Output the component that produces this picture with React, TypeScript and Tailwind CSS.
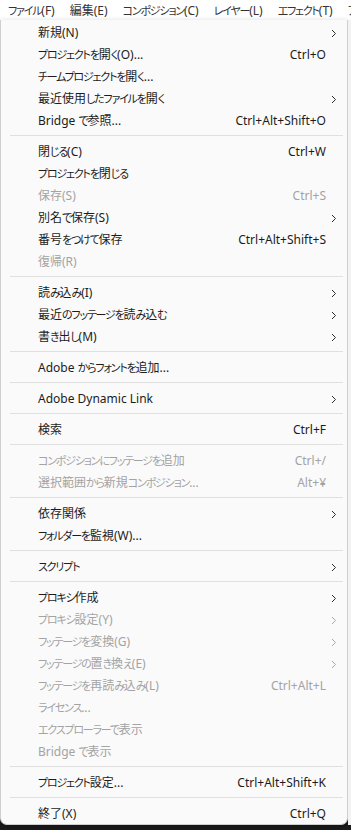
import React from 'react';

type Item =
  | { sep: true }
  | { sep?: false; label: string; shortcut?: string; sub?: boolean; disabled?: boolean };

const menuBar = ['ファイル(F)', '編集(E)', 'コンポジション(C)', 'レイヤー(L)', 'エフェクト(T)', 'アニメーション(A)'];

const items: Item[] = [
  { label: '新規(N)', sub: true },
  { label: 'プロジェクトを開く(O)...', shortcut: 'Ctrl+O' },
  { label: 'チームプロジェクトを開く...' },
  { label: '最近使用したファイルを開く', sub: true },
  { label: 'Bridge で参照...', shortcut: 'Ctrl+Alt+Shift+O' },
  { sep: true },
  { label: '閉じる(C)', shortcut: 'Ctrl+W' },
  { label: 'プロジェクトを閉じる' },
  { label: '保存(S)', shortcut: 'Ctrl+S', disabled: true },
  { label: '別名で保存(S)', sub: true },
  { label: '番号をつけて保存', shortcut: 'Ctrl+Alt+Shift+S' },
  { label: '復帰(R)', disabled: true },
  { sep: true },
  { label: '読み込み(I)', sub: true },
  { label: '最近のフッテージを読み込む', sub: true },
  { label: '書き出し(M)', sub: true },
  { sep: true },
  { label: 'Adobe からフォントを追加...' },
  { sep: true },
  { label: 'Adobe Dynamic Link', sub: true },
  { sep: true },
  { label: '検索', shortcut: 'Ctrl+F' },
  { sep: true },
  { label: 'コンポジションにフッテージを追加', shortcut: 'Ctrl+/', disabled: true },
  { label: '選択範囲から新規コンポジション...', shortcut: 'Alt+¥', disabled: true },
  { sep: true },
  { label: '依存関係', sub: true },
  { label: 'フォルダーを監視(W)...' },
  { sep: true },
  { label: 'スクリプト', sub: true },
  { sep: true },
  { label: 'プロキシ作成', sub: true },
  { label: 'プロキシ設定(Y)', sub: true, disabled: true },
  { label: 'フッテージを変換(G)', sub: true, disabled: true },
  { label: 'フッテージの置き換え(E)', sub: true, disabled: true },
  { label: 'フッテージを再読み込み(L)', shortcut: 'Ctrl+Alt+L', disabled: true },
  { label: 'ライセンス...', disabled: true },
  { label: 'エクスプローラーで表示', disabled: true },
  { label: 'Bridge で表示', disabled: true },
  { sep: true },
  { label: 'プロジェクト設定...', shortcut: 'Ctrl+Alt+Shift+K' },
  { sep: true },
  { label: '終了(X)', shortcut: 'Ctrl+Q' },
];

// kana in the original UI font are smaller and narrower than kanji, so shrink kana runs
function Jp({ text }: { text: string }) {
  const parts = text.split(/([\u3040-\u30ff]+)/);
  return (
    <>
      {parts.map((p, i) =>
        /^[\u3040-\u30ff]+$/.test(p) ? (
          <span key={i} className="text-[11px] tracking-[-1.2px]">{p}</span>
        ) : (
          <React.Fragment key={i}>{p}</React.Fragment>
        )
      )}
    </>
  );
}

function Chevron({ disabled }: { disabled?: boolean }) {
  return (
    <svg width="6" height="9" viewBox="0 0 6 9" className={disabled ? 'text-[#a8a8a8]' : 'text-[#2b2b2b]'}>
      <path d="M1 1 L4.5 4.5 L1 8" fill="none" stroke="currentColor" strokeWidth="1" />
    </svg>
  );
}

export default function App() {
  return (
    <div
      className="w-[351px] h-[830px] bg-[#1b1b1b] flex flex-col text-[12px] [font-feature-settings:'palt'] overflow-hidden"
      style={{ fontFamily: '"Noto Sans", "Noto Sans CJK JP", sans-serif' }}
    >
      {/* menu bar */}
      <div className="h-[20px] bg-white flex items-center gap-[15px] pl-[8px] text-[#333333] whitespace-nowrap shrink-0 overflow-hidden">
        {menuBar.map((m) => (
          <span key={m} className="leading-[20px] pt-[1px]">
            <Jp text={m} />
          </span>
        ))}
      </div>

      <div className="flex flex-1 items-start">
        {/* file menu */}
        <div className="w-[348px] bg-[#fafafa] border border-t-0 border-[#cfcfcf] rounded-b-[7px] shadow-[0_2px_6px_rgba(0,0,0,0.25)] pt-[1px]">
          {items.map((it, i) =>
            it.sep ? (
              <div key={i} className="h-[9px] flex items-center pl-[9px] pr-[4px]">
                <div className="h-px w-full bg-[#e0e0e0]" />
              </div>
            ) : (
              <div
                key={i}
                className={`h-[22px] flex items-center pl-[37px] pt-[2px] whitespace-nowrap ${
                  it.disabled ? 'text-[#a3a3a3]' : 'text-[#1c1c1c]'
                }`}
              >
                <span className="flex-1">
                  <Jp text={it.label} />
                </span>
                <span className="text-right">{it.shortcut ?? ''}</span>
                <span className="w-[21px] flex items-center pl-[5px]">
                  {it.sub && <Chevron disabled={it.disabled} />}
                </span>
              </div>
            )
          )}
        </div>
        <div className="flex-1 self-stretch bg-[#f3f3f3] h-[805px]" />
      </div>
    </div>
  );
}
